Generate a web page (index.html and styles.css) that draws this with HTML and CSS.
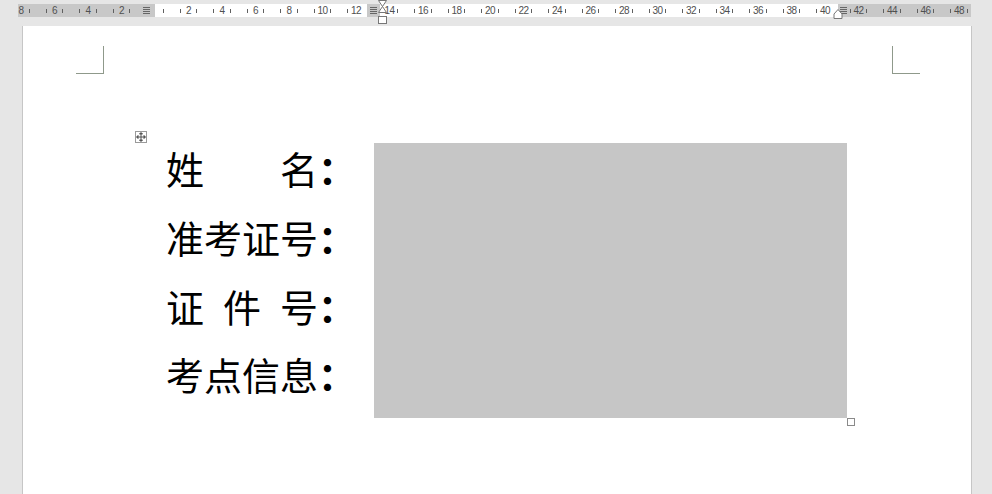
FILE: index.html
```html
<!DOCTYPE html>
<html lang="zh-CN">
<head>
<meta charset="utf-8">
<title>准考证</title>
<link rel="stylesheet" href="styles.css">
</head>
<body>
<div class="ruler-bar">
  <div class="ruler">
    <div class="seg grey seg-left"><svg class="tblicon" viewBox="0 0 7 8" width="7" height="8"><path d="M0 .5h7M0 2.5h7M0 4.5h7M0 6.5h7M1.5 0v8M3.5 0v8M5.5 0v8" stroke="#666" stroke-width="1" stroke-dasharray="1 1" fill="none"/></svg></div>
    <div class="seg white seg-c1"></div>
    <div class="seg grey seg-mid"><svg class="tblicon" viewBox="0 0 7 8" width="7" height="8"><path d="M0 .5h7M0 2.5h7M0 4.5h7M0 6.5h7M1.5 0v8M3.5 0v8M5.5 0v8" stroke="#666" stroke-width="1" stroke-dasharray="1 1" fill="none"/></svg></div>
    <div class="seg white seg-c2"></div>
    <div class="seg grey seg-right"><svg class="tblicon" viewBox="0 0 7 8" width="7" height="8"><path d="M0 .5h7M0 2.5h7M0 4.5h7M0 6.5h7M1.5 0v8M3.5 0v8M5.5 0v8" stroke="#666" stroke-width="1" stroke-dasharray="1 1" fill="none"/></svg></div>
    <div class="marks"></div>
    <svg class="indent-left" width="11" height="25" viewBox="0 0 11 25">
      <path d="M1.5 .5h8L5.5 6.5z M5.5 6.5l4 6h-8z" fill="#fff" stroke="#777" stroke-width="1"/>
      <rect x="1.5" y="16.5" width="8" height="7" fill="#fff" stroke="#777" stroke-width="1"/>
    </svg>
    <svg class="indent-right" width="10" height="10" viewBox="0 0 10 10">
      <path d="M5 .5l4 4.5v4.5h-8v-4.5z" fill="#fff" stroke="#777" stroke-width="1"/>
    </svg>
  </div>
</div>
<div class="page">
  <div class="corners">
    <div class="corner corner-l"></div>
    <div class="corner corner-r"></div>
  </div>
  <div class="form">
    <div class="move-handle">
      <svg width="10" height="10" viewBox="0 0 10 10"><path d="M5 1v8M1 5h8M5 .5l-1.5 1.5h3zM5 9.5l-1.5-1.5h3zM.5 5l1.5-1.5v3zM9.5 5l-1.5-1.5v3z" stroke="#555" stroke-width="1" fill="#555"/></svg>
    </div>
    <div class="label"><span class="chars"><span>姓</span><span>名</span></span><span class="colon">：</span></div>
    <div class="photo"><span class="resize"></span></div>
    <div class="label"><span class="chars"><span>准</span><span>考</span><span>证</span><span>号</span></span><span class="colon">：</span></div>
    <div class="label"><span class="chars"><span>证</span><span>件</span><span>号</span></span><span class="colon">：</span></div>
    <div class="label"><span class="chars"><span>考</span><span>点</span><span>信</span><span>息</span></span><span class="colon">：</span></div>
  </div>
</div>
<script src="script.js"></script>
</body>
</html>
```
FILE: styles.css
```css
* { box-sizing: border-box; }
html, body { margin: 0; padding: 0; }
body {
  background: #e6e6e6;
  width: 992px;
  height: 494px;
  overflow: hidden;
  font-family: "Liberation Sans", Arial, sans-serif;
}
.ruler-bar {
  height: 26px;
  padding-top: 4px;
  padding-left: 18px;
}
.ruler {
  position: relative;
  width: 953px;
  height: 13px;
  display: flex;
}
.seg { height: 13px; display: flex; align-items: center; }
.grey { background: #c8c8c8; }
.white { background: #ffffff; }
.seg-left { width: 137px; justify-content: flex-end; padding-right: 5px; }
.seg-c1 { width: 212px; }
.seg-mid { width: 13px; justify-content: center; }
.seg-c2 { width: 458px; }
.seg-right { flex: 1; padding-left: 2px; }
.tblicon { display: block; }
.marks {
  position: absolute;
  left: -1.19px;
  top: 0;
  height: 13px;
  display: flex;
  align-items: center;
  pointer-events: none;
}
.cell {
  flex: 0 0 8.375px;
  width: 8.375px;
  min-width: 0;
  height: 13px;
  display: flex;
  justify-content: center;
  align-items: center;
  white-space: nowrap;
  font-size: 10px;
  color: #505050;
  letter-spacing: -0.5px;
}
.tick::before {
  content: "";
  display: block;
  flex: none;
  width: 1px;
  height: 4px;
  margin-top: 1px;
  background: #606060;
}
.indent-left { position: absolute; left: 359px; top: -4px; }
.indent-right { position: absolute; left: 815px; top: 5px; }

.page {
  margin-left: 22px;
  width: 950px;
  height: 470px;
  background: #fff;
  border-left: 1px solid #c6c6c6;
  border-right: 1px solid #c6c6c6;
  padding-top: 20px;
}
.corners {
  display: flex;
  justify-content: space-between;
  padding-left: 53px;
  padding-right: 51px;
}
.corner {
  width: 28px;
  height: 28px;
  border-bottom: 1px solid #8f998b;
}
.corner-l { border-right: 1px solid #8f998b; }
.corner-r { border-left: 1px solid #8f998b; }

.form {
  position: relative;
  margin-top: 69px;
  margin-left: 143px;
  display: grid;
  grid-template-columns: 208px 473px;
  grid-auto-rows: 68.75px;
  font-family: "Noto Sans CJK SC", "Noto Sans CJK JP", sans-serif;
  font-size: 38px;
  color: #000;
}
.move-handle {
  position: absolute;
  left: -31px;
  top: -12px;
  width: 12px;
  height: 12px;
  border: 1px solid #9a9a9a;
  background: #fff;
  display: flex;
  align-items: center;
  justify-content: center;
}
.move-handle svg { display: block; }
.label {
  display: flex;
  line-height: 50px;
  height: 50px;
}
.chars {
  width: 152px;
  display: flex;
  justify-content: space-between;
}
.colon { width: 38px; font-weight: bold; }
.photo {
  grid-column: 2;
  grid-row: 1 / span 4;
  background: #c6c6c6;
  position: relative;
}
.resize {
  position: absolute;
  right: -8px;
  bottom: -8px;
  width: 8px;
  height: 8px;
  border: 1px solid #8a8a8a;
  background: #fff;
}
```
FILE: script.js
```js
(function () {
  var marks = document.querySelector('.marks');
  var hidden = [-1, 25, 27, 81];
  for (var k = -16; k <= 97; k++) {
    var c = document.createElement('span');
    c.className = 'cell';
    if (k % 4 === 0 && k !== 0) {
      c.textContent = String(Math.abs(k / 2));
    } else if (k % 2 !== 0 && hidden.indexOf(k) === -1) {
      c.classList.add('tick');
    }
    marks.appendChild(c);
  }
})();
```
